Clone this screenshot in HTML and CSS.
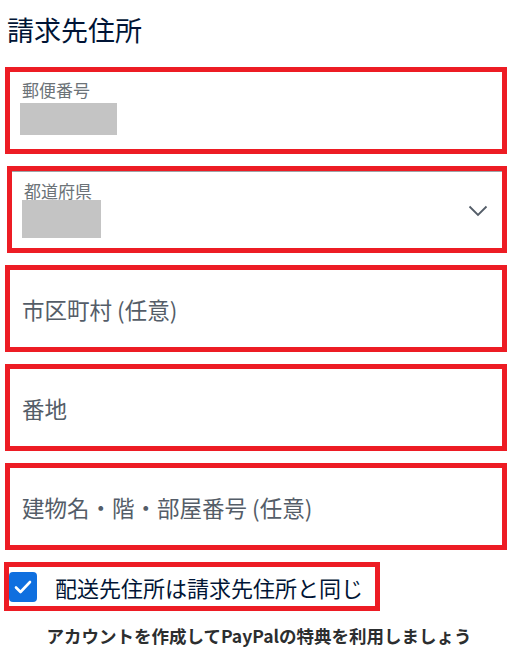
FILE: index.html
```html
<!DOCTYPE html>
<html lang="ja">
<head>
    <meta charset="UTF-8">
    <meta name="viewport" content="width=device-width, initial-scale=1.0">
    <title>請求先住所</title>
    <link rel="stylesheet" href="styles.css">
</head>
<body>
    <h1 class="title">請求先住所</h1>

    <form class="address">
        <div class="field filled">
            <span class="label">郵便番号</span>
            <span class="masked postal"></span>
        </div>

        <div class="field filled select">
            <span class="label">都道府県</span>
            <span class="masked pref"></span>
            <svg class="chevron" width="20" height="12" viewBox="0 0 20 12">
                <path d="M1.5 1.5 L10 10 L18.5 1.5" fill="none" stroke="#545d68" stroke-width="1.8"/>
            </svg>
        </div>

        <div class="field">
            <span class="placeholder">市区町村 (任意)</span>
        </div>

        <div class="field">
            <span class="placeholder">番地</span>
        </div>

        <div class="field">
            <span class="placeholder">建物名・階・部屋番号 (任意)</span>
        </div>

        <label class="same">
            <span class="checkbox">
                <svg width="18" height="14" viewBox="0 0 18 14">
                    <path d="M2 7.5 L6.5 12 L16 2" fill="none" stroke="white" stroke-width="2.6" stroke-linecap="round" stroke-linejoin="round"/>
                </svg>
            </span>
            <span class="same-text">配送先住所は請求先住所と同じ</span>
        </label>
    </form>

    <p class="promo">アカウントを作成してPayPalの特典を利用しましょう</p>
</body>
</html>
```

FILE: styles.css
```css
body {
    font-family: "Noto Sans CJK JP", "Noto Sans", sans-serif;
    margin: 0;
    padding: 0;
    background-color: #fff;
    color: #001435;
}

.title {
    font-size: 27px;
    font-weight: normal;
    line-height: 34px;
    margin: 0;
    padding: 13px 0 0 7px;
    height: 67px;
    box-sizing: border-box;
}

.address {
    display: flex;
    flex-direction: column;
    gap: 12px;
    padding: 0 9px 0 5px;
}

.field {
    position: relative;
    height: 87px;
    box-sizing: border-box;
    border: 5px solid #ed1c24;
    padding: 0 10px;
    display: flex;
    flex-direction: column;
    justify-content: center;
}

.field.filled {
    justify-content: flex-start;
    padding-top: 8px;
}

.field.select {
    margin-left: 2px;
    padding-top: 10px;
    box-shadow: inset 0 1px 0 #9da3a6;
}

.label {
    font-size: 17px;
    line-height: 20px;
    color: #6c7378;
    padding-left: 2px;
}

.masked {
    display: block;
    background-color: #c4c4c4;
}

.postal {
    width: 97px;
    height: 32px;
    margin-top: 3px;
}

.pref {
    width: 79px;
    height: 38px;
    margin-top: -1px;
}

.chevron {
    position: absolute;
    right: 14px;
    top: 34px;
}

.placeholder {
    font-size: 22.5px;
    color: #545d68;
    padding-left: 2px;
}

.same {
    display: flex;
    align-items: center;
    gap: 18px;
    width: 376px;
    height: 49px;
    box-sizing: border-box;
    border: 5px solid #ed1c24;
    margin-left: -1px;
}

.checkbox {
    display: flex;
    align-items: center;
    justify-content: center;
    width: 28px;
    height: 30px;
    background-color: #0f6fdf;
    border-radius: 4px;
}

.same-text {
    font-size: 22px;
    line-height: 1;
    color: #001435;
}

.promo {
    font-size: 17.5px;
    font-weight: bold;
    color: #2c2e2f;
    text-align: center;
    margin: 12px 0 0;
    padding-left: 2px;
}
```
